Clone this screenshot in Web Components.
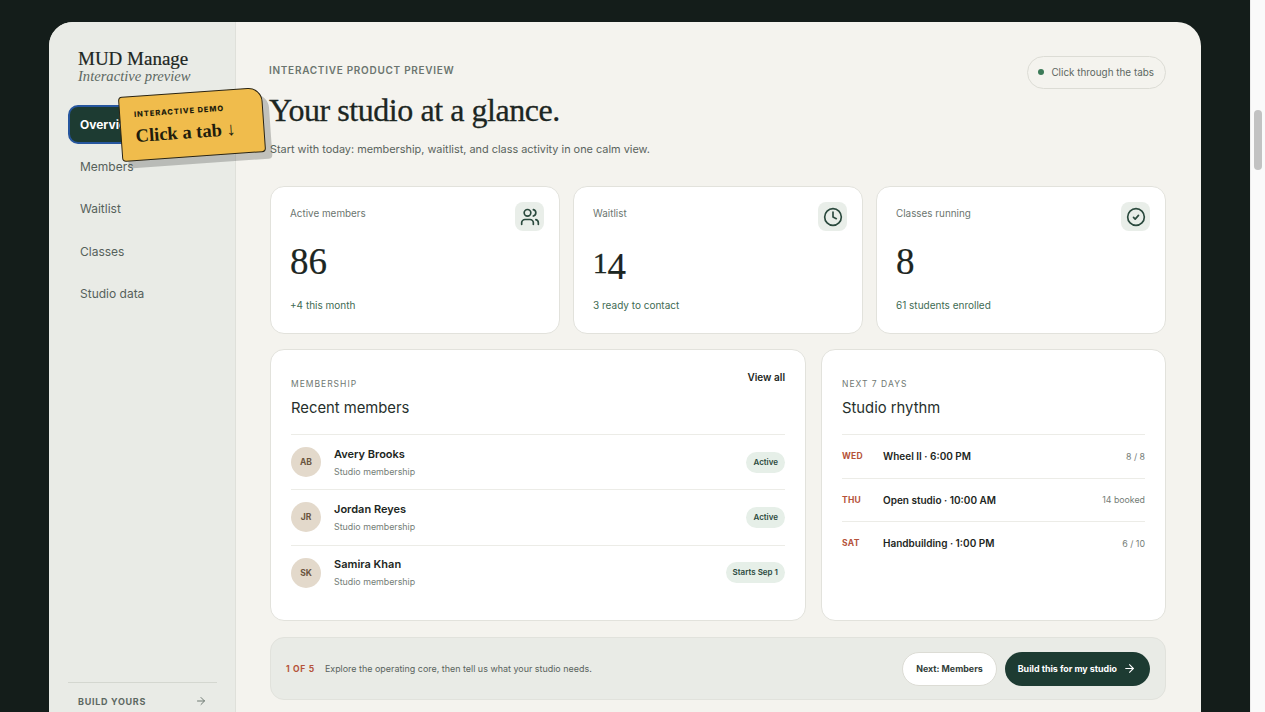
<!DOCTYPE html>
<html lang="en">
<head>
<meta charset="utf-8">
<title>MUD Manage</title>
<style>
  html, body { margin: 0; height: 100%; overflow: hidden; }
  body { display: flex; background: #141d1a; font-family: Inter, "Liberation Sans", sans-serif; color: #1c2622; }
  app-shell { flex: 1 1 auto; min-width: 0; }
</style>
</head>
<body>
<app-shell>
  <side-nav slot="side"></side-nav>
  <page-head></page-head>
  <div class="stats" slot="stats">
    <stat-card label="Active members" value="86" note="+4 this month" icon="users"></stat-card>
    <stat-card label="Waitlist" value="14" note="3 ready to contact" icon="clock" oldstyle></stat-card>
    <stat-card label="Classes running" value="8" note="61 students enrolled" icon="check"></stat-card>
  </div>
  <div slot="panels">
    <members-panel></members-panel>
    <rhythm-panel></rhythm-panel>
  </div>
  <tour-bar slot="tour"></tour-bar>
</app-shell>
<fake-scrollbar></fake-scrollbar>

<script>
const SERIF = '"Liberation Serif", "DejaVu Serif", serif';

const ICONS = {
  users: '<path d="M16 21v-2a4 4 0 0 0-4-4H6a4 4 0 0 0-4 4v2"/><circle cx="9" cy="7" r="4"/><path d="M22 21v-2a4 4 0 0 0-3-3.87"/><path d="M16 3.13a4 4 0 0 1 0 7.75"/>',
  clock: '<circle cx="12" cy="12" r="10"/><polyline points="12 6 12 12 16 14"/>',
  check: '<circle cx="12" cy="12" r="10"/><path d="m9 12.5 2 2 4-4.5"/>',
  arrow: '<path d="M5 12h14"/><path d="m12 5 7 7-7 7"/>'
};

function icon(name, size) {
  return `<svg width="${size}" height="${size}" viewBox="0 0 24 24" fill="none" stroke="currentColor" stroke-width="2" stroke-linecap="round" stroke-linejoin="round">${ICONS[name]}</svg>`;
}

class AppShell extends HTMLElement {
  constructor() {
    super();
    this.attachShadow({ mode: "open" });
    this.shadowRoot.innerHTML = `
      <style>
        :host { display: block; height: 100%; padding: 22px 49px 0; box-sizing: border-box; overflow: hidden; }
        .frame { display: flex; background: #f4f3ee; border-radius: 24px 24px 0 0; height: 760px; overflow: hidden; }
        .side { flex: 0 0 187px; display: flex; }
        .main { flex: 1 1 auto; min-width: 0; padding: 34px 35px 0 34px; }
        ::slotted([slot="stats"]) { display: grid; grid-template-columns: repeat(3, 290px); column-gap: 13px; margin-top: 30px; }
        ::slotted([slot="panels"]) { display: grid; grid-template-columns: 536px 345px; column-gap: 15px; margin-top: 15px; }
      </style>
      <div class="frame">
        <div class="side"><slot name="side"></slot></div>
        <div class="main">
          <slot></slot>
          <slot name="stats"></slot>
          <slot name="panels"></slot>
          <slot name="tour"></slot>
        </div>
      </div>`;
  }
}

class SideNav extends HTMLElement {
  constructor() {
    super();
    this.attachShadow({ mode: "open" });
    this.shadowRoot.innerHTML = `
      <style>
        :host { display: flex; flex-direction: column; width: 100%; box-sizing: border-box; height: 712px; background: #e9ebe6; border-right: 1px solid #dfe0da; padding: 27px 18px 0 19px; position: relative; }
        .brand { padding-left: 10px; font-family: ${SERIF}; }
        .name { font-size: 19px; line-height: 20px; color: #1c2622; -webkit-text-stroke: .2px #1c2622; }
        .sub { font-size: 14.6px; line-height: 14px; font-style: italic; color: #5d6862; }
        nav { display: flex; flex-direction: column; gap: 3.5px; margin-top: 22px; }
        a { display: block; height: 39px; line-height: 38px; padding-left: 12px; font-size: 12px; color: #56615b; border-radius: 10px; box-sizing: border-box; }
        a.on { background: #1d3b32; color: #fff; font-weight: 700; border: 2px solid #26569e; line-height: 35px; padding-left: 10px; }
        .foot { margin-top: auto; margin-bottom: 27px; border-top: 1px solid #d4d7d0; padding: 12px 10px 0 10px; display: flex; align-items: center; justify-content: space-between; font-size: 9px; font-weight: 700; letter-spacing: .7px; color: #5d6862; }
        .foot svg { display: block; color: #6f7a73; }
        .sticker { position: absolute; left: 71px; top: 70px; width: 144px; height: 65px; box-sizing: border-box; background: #f0bc4c; border: 1.5px solid #2a2413; border-radius: 4px 14px 4px 4px; box-shadow: 6px 7px 0 rgba(60,66,60,.28); transform: rotate(-4deg); padding: 13px 0 0 14px; color: #221c0c; z-index: 2; }
        .sticker small { display: block; font-size: 7.5px; line-height: 10px; font-weight: 800; letter-spacing: .9px; }
        .sticker b { display: block; font-family: ${SERIF}; font-size: 18.5px; line-height: 24px; margin-top: 4px; white-space: nowrap; }
      </style>
      <div class="brand">
        <div class="name">MUD Manage</div>
        <div class="sub">Interactive preview</div>
      </div>
      <nav>
        <a class="on">Overview</a>
        <a>Members</a>
        <a>Waitlist</a>
        <a>Classes</a>
        <a>Studio data</a>
      </nav>
      <div class="sticker"><small>INTERACTIVE DEMO</small><b>Click a tab ↓</b></div>
      <div class="foot"><span>BUILD YOURS</span>${icon("arrow", 12)}</div>`;
  }
}

class PageHead extends HTMLElement {
  constructor() {
    super();
    this.attachShadow({ mode: "open" });
    this.shadowRoot.innerHTML = `
      <style>
        :host { display: flex; justify-content: space-between; align-items: flex-start; }
        .eyebrow { font-size: 10px; line-height: 12px; font-weight: 600; letter-spacing: .72px; color: #6b756f; margin-top: 8px; margin-left: -1px; }
        h1 { margin: 14px 0 0 -1px; font-family: ${SERIF}; font-weight: 400; font-size: 32px; line-height: 40px; letter-spacing: -.45px; color: #1c2622; -webkit-text-stroke: .3px #1c2622; }
        p { margin: 12px 0 0; font-size: 10.9px; line-height: 14px; color: #59635d; }
        .pill { display: flex; align-items: center; gap: 7px; height: 33px; box-sizing: border-box; padding: 0 11px 1px 10px; border: 1px solid #dcdcd5; border-radius: 17px; font-size: 9.9px; color: #5d6862; }
        .pill i { width: 6px; height: 6px; border-radius: 50%; background: #3c7a58; }
      </style>
      <div>
        <div class="eyebrow">INTERACTIVE PRODUCT PREVIEW</div>
        <h1>Your studio at a glance.</h1>
        <p>Start with today: membership, waitlist, and class activity in one calm view.</p>
      </div>
      <div class="pill"><i></i>Click through the tabs</div>`;
  }
}

class StatCard extends HTMLElement {
  connectedCallback() {
    const root = this.attachShadow({ mode: "open" });
    const value = this.getAttribute("value");
    // the reference face has old style figures: small 1, and the 4 hangs below the baseline
    const shown = this.hasAttribute("oldstyle") ? `<span class="one">${value[0]}</span><span class="low">${value.slice(1)}</span>` : value;
    root.innerHTML = `
      <style>
        :host { display: block; height: 148px; box-sizing: border-box; background: #fff; border: 1px solid #e2e2dc; border-radius: 14px; padding: 15px 15px 0 19px; position: relative; }
        .top { display: flex; justify-content: space-between; align-items: flex-start; }
        .label { font-size: 9.9px; line-height: 23px; color: #6b756f; }
        .tile { width: 29px; height: 29px; border-radius: 8px; background: #e9eee9; display: flex; align-items: center; justify-content: center; color: #2b4a3e; }
        .value { font-family: ${SERIF}; font-size: 37px; line-height: 44px; height: 44px; margin-top: 9px; color: #1c2622; -webkit-text-stroke: .2px #1c2622; }
        .one { display: inline-block; line-height: 1; font-size: 29px; transform: translateY(-1px); -webkit-text-stroke: .5px #1c2622; }
        .low { display: inline-block; line-height: 1; transform: translateY(5px); }
        .note { font-size: 10px; line-height: 14px; color: #3e6b53; margin-top: 14px; }
      </style>
      <div class="top">
        <span class="label">${this.getAttribute("label")}</span>
        <span class="tile">${icon(this.getAttribute("icon"), 20)}</span>
      </div>
      <div class="value">${shown}</div>
      <div class="note">${this.getAttribute("note")}</div>`;
  }
}

const PANEL_CSS = `
  :host { display: block; height: 272px; box-sizing: border-box; background: #fff; border: 1px solid #e2e2dc; border-radius: 14px; padding: 28px 20px 0; position: relative; }
  .kicker { font-size: 8.5px; line-height: 12px; letter-spacing: 1px; color: #6f7872; }
  h2 { margin: 7px 0 0; font-size: 14.8px; line-height: 22px; font-weight: 400; color: #26302c; }
`;

class MembersPanel extends HTMLElement {
  constructor() {
    super();
    this.attachShadow({ mode: "open" });
    const rows = [
      ["AB", "Avery Brooks", "Active"],
      ["JR", "Jordan Reyes", "Active"],
      ["SK", "Samira Khan", "Starts Sep 1"]
    ];
    this.shadowRoot.innerHTML = `
      <style>
        ${PANEL_CSS}
        .all { position: absolute; right: 20px; top: 21px; font-size: 10px; line-height: 12px; font-weight: 600; color: #1c2622; }
        .list { margin-top: 15px; }
        .row { display: flex; align-items: center; height: 55.3px; box-sizing: border-box; border-top: 1px solid #ecece7; }
        .av { flex: none; width: 30px; height: 30px; border-radius: 50%; background: #e3d9cb; color: #6a5540; font-size: 8.5px; font-weight: 700; display: flex; align-items: center; justify-content: center; margin-right: 13px; }
        .who { flex: 1; }
        .who b { display: block; font-size: 11px; line-height: 14px; font-weight: 600; color: #1c2622; }
        .who span { display: block; font-size: 8.85px; line-height: 12px; margin-top: 5px; color: #747d77; }
        .tag { font-size: 8px; font-weight: 600; line-height: 21px; padding: 0 7px; border-radius: 11px; background: #e6efe8; color: #2b4a3e; }
      </style>
      <div class="kicker">MEMBERSHIP</div>
      <h2>Recent members</h2>
      <span class="all">View all</span>
      <div class="list">
        ${rows.map(r => `<div class="row"><span class="av">${r[0]}</span><div class="who"><b>${r[1]}</b><span>Studio membership</span></div><span class="tag">${r[2]}</span></div>`).join("")}
      </div>`;
  }
}

class RhythmPanel extends HTMLElement {
  constructor() {
    super();
    this.attachShadow({ mode: "open" });
    const rows = [
      ["WED", "Wheel II · 6:00 PM", "8 / 8"],
      ["THU", "Open studio · 10:00 AM", "14 booked"],
      ["SAT", "Handbuilding · 1:00 PM", "6 / 10"]
    ];
    this.shadowRoot.innerHTML = `
      <style>
        ${PANEL_CSS}
        .list { margin-top: 15px; }
        .row { display: flex; align-items: center; height: 43.5px; box-sizing: border-box; border-top: 1px solid #ecece7; }
        .day { flex: 0 0 41px; font-size: 8.5px; font-weight: 700; letter-spacing: .3px; color: #b5533a; }
        .what { flex: 1; font-size: 10px; font-weight: 600; color: #1c2622; }
        .n { font-size: 8.8px; color: #747d77; }
      </style>
      <div class="kicker">NEXT 7 DAYS</div>
      <h2>Studio rhythm</h2>
      <div class="list">
        ${rows.map(r => `<div class="row"><span class="day">${r[0]}</span><span class="what">${r[1]}</span><span class="n">${r[2]}</span></div>`).join("")}
      </div>`;
  }
}

class TourBar extends HTMLElement {
  constructor() {
    super();
    this.attachShadow({ mode: "open" });
    this.shadowRoot.innerHTML = `
      <style>
        :host { display: flex; align-items: center; height: 63px; box-sizing: border-box; margin-top: 16px; padding: 0 15px 0 15px; background: #e9ebe6; border: 1px solid #e1e2dc; border-radius: 14px; }
        .step { font-size: 8.5px; font-weight: 700; letter-spacing: .7px; color: #b5533a; margin-right: 10px; }
        .msg { flex: 1; font-size: 8.95px; color: #59635d; }
        .next, .go { height: 34px; box-sizing: border-box; border-radius: 17px; display: flex; align-items: center; font-size: 8.9px; font-weight: 700; }
        .next { padding: 0 13px; background: #fff; border: 1px solid #dcdcd5; color: #33403a; margin-right: 8px; }
        .go { padding: 0 14px 0 13px; gap: 6px; background: #1d3b32; color: #fff; }
        .go svg { display: block; }
      </style>
      <span class="step">1 OF 5</span>
      <span class="msg">Explore the operating core, then tell us what your studio needs.</span>
      <span class="next">Next: Members</span>
      <span class="go">Build this for my studio ${icon("arrow", 13)}</span>`;
  }
}

class FakeScrollbar extends HTMLElement {
  constructor() {
    super();
    this.attachShadow({ mode: "open" });
    this.shadowRoot.innerHTML = `
      <style>
        :host { display: block; flex: 0 0 15px; height: 100%; box-sizing: border-box; background: #fafafa; border-left: 1px solid #ececec; padding: 110px 3px 0 3px; }
        div { height: 60px; border-radius: 4px; background: #c2c2c2; }
      </style>
      <div></div>`;
  }
}

customElements.define("app-shell", AppShell);
customElements.define("side-nav", SideNav);
customElements.define("page-head", PageHead);
customElements.define("stat-card", StatCard);
customElements.define("members-panel", MembersPanel);
customElements.define("rhythm-panel", RhythmPanel);
customElements.define("tour-bar", TourBar);
customElements.define("fake-scrollbar", FakeScrollbar);
</script>
</body>
</html>
